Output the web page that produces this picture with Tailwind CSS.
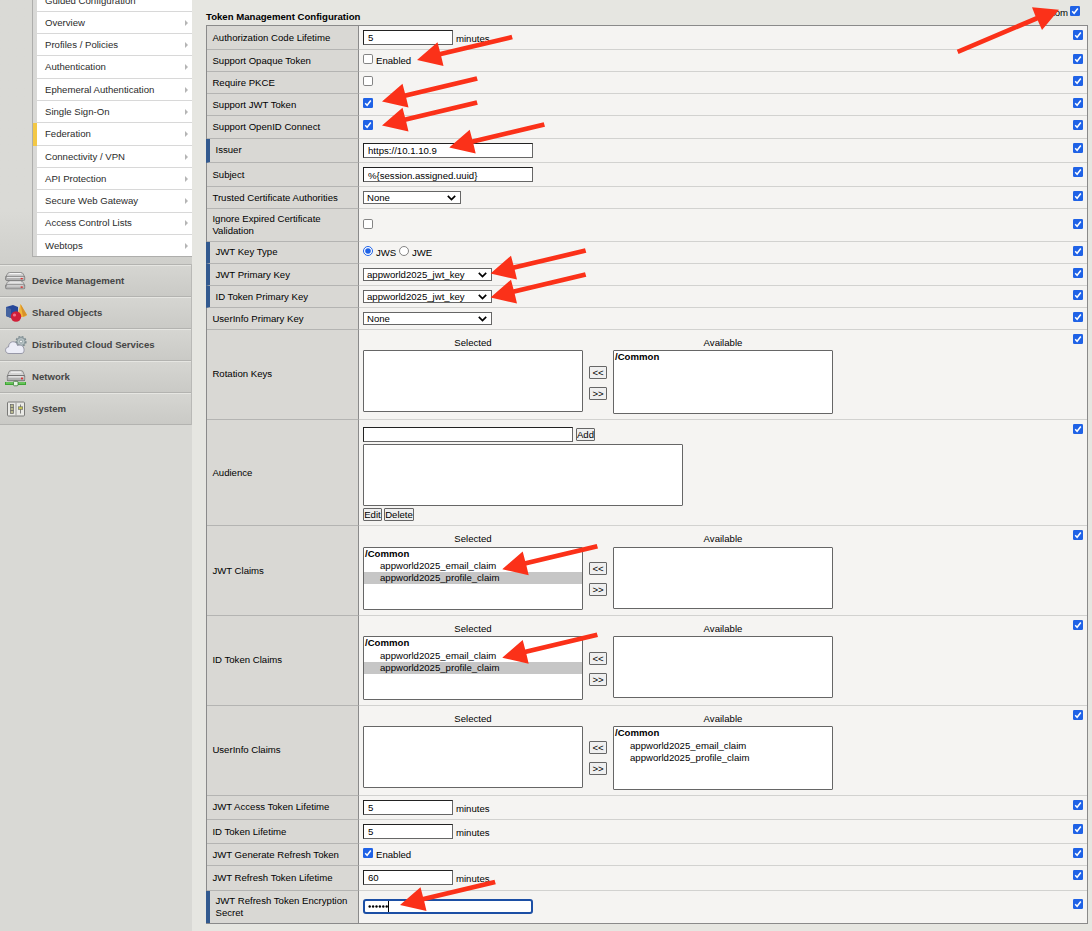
<!DOCTYPE html>
<html lang="en">
<head>
<meta charset="utf-8">
<title>Token Management Configuration</title>
<script src="https://cdn.jsdelivr.net/npm/@tailwindcss/browser@4"></script>
</head>
<body class="w-[1092px] h-[931px] overflow-hidden bg-[#e6e6e1] text-black text-[9.6px] leading-[12px] font-['Liberation_Sans',Arial,sans-serif]">
<svg class="hidden">
  <symbol id="on" viewBox="0 0 10 10"><rect width="10" height="10" rx="1.3" fill="#1f62e6"/><path d="M2.2 5.3 4.1 7.3 7.8 2.5" fill="none" stroke="#fff" stroke-width="1.5"/></symbol>
  <symbol id="off" viewBox="0 0 10 10"><rect x=".5" y=".5" width="9" height="9" rx="1.3" fill="#fff" stroke="#767676" stroke-width=".9"/></symbol>
  <symbol id="ron" viewBox="0 0 10 10"><circle cx="5" cy="5" r="4.5" fill="#fff" stroke="#1f62e6"/><circle cx="5" cy="5" r="2.8" fill="#1f62e6"/></symbol>
  <symbol id="roff" viewBox="0 0 10 10"><circle cx="5" cy="5" r="4.5" fill="#fff" stroke="#767676" stroke-width=".9"/></symbol>
  <symbol id="arrow" viewBox="0 -30 100 40"><path d="M0 0 20.5-17.8 23-8.2 94.5-25.2 95.8-20.7 24.2-3.7 26.5 6z" fill="#fb3119"/></symbol>
  <symbol id="disk" viewBox="0 0 20 9" preserveAspectRatio="none"><path d="M4.500.5h11c1.200 0 1.800.5 2.200 1.400L19.300 5H.7L2.300 1.900C2.700 1 3.300.5 4.500.5z" fill="#d4d4d4" stroke="#858585" stroke-width=".8"/><path d="M4.500 1.600h11" stroke="#f6f6f6"/><rect x=".6" y="4.300" width="18.800" height="4.200" rx="1.200" fill="#b2b2b2" stroke="#747474" stroke-width=".8"/><path d="M2 5.400h16" stroke="#efefef" stroke-width=".9"/><rect x="15.300" y="5.900" width="2" height="1.400" fill="#dc2f2f"/></symbol>
</svg>
<div class="relative flex w-[1092px] h-[931px] overflow-hidden">
  <nav class="flex flex-col w-[192px] h-[931px] shrink-0 bg-[#d9d9d5] text-[#2b2b2b]">
    <div class="h-[264px] pl-[32px] bg-linear-to-b from-[#dadad6] from-80% to-[#cfcfcb]">
      <div id="menu" class="h-[257px] overflow-hidden flex flex-col border-l border-b border-[#aeaeac] bg-[#d9d9d7]"></div>
    </div>
    <div id="sections" class="flex flex-col border-r border-[#b9b9b6] text-[#454545] font-bold"></div>
  </nav>
  <main class="flex flex-col w-[900px] pl-[14px]">
    <div class="flex justify-between h-[25px] w-[874px]">
      <h1 class="pt-[11px] font-bold text-[9.6px]">Token Management Configuration</h1>
      <div class="flex pt-[6px] gap-[2px]"><span class="pt-px">Custom</span><svg class="size-[10px]"><use href="#on"/></svg></div>
    </div>
    <div id="rows" class="w-[882px] h-[899px] border border-[#8a8a8a] bg-[#f5f4f2] flex flex-col"></div>
  </main>
  <div id="arrows"></div>
</div>
<script>
const cb = id => `<svg class="size-[10px] shrink-0"><use href="#${id}"/></svg>`;
const W = {90:'w-[90px]',170:'w-[170px]',210:'w-[210px]',98:'w-[98px]',129:'w-[129px]',19:'w-[19px]',30:'w-[30px]',18:'w-[18px]'};
const input = (t,w,p='pt-[1px]') => `<div class="${W[w]} ${p} h-[15px] pl-[4px] border border-t-[#222] border-l-[#222] border-r-[#666] border-b-[#666] bg-white">${t}</div>`;
const minutes = t => `<div class="flex pt-[4px]">${input(t,90)}<span class="pl-[3px] pt-[3px]">minutes</span></div>`;
const check = (id,t='') => `<div class="flex pt-[4px]">${cb(id)}<span class="pl-[3px] pt-[1px]">${t}</span></div>`;
const select = (t,w) => `<div class="pt-[4px]"><div class="${W[w]} h-[13px] flex justify-between items-center border border-[#666] bg-white pl-[3px] pr-[4px]"><span>${t}</span><svg class="w-[9px] h-[6px]" viewBox="0 0 9 6"><path d="M.8.8 4.5 4.5 8.2.8" fill="none" stroke="#000" stroke-width="1.7"/></svg></div></div>`;
const btn = (t,w) => `<div class="${W[w]} h-[13px] flex items-center justify-center border border-[#666] rounded-[1px] bg-[#efefef] whitespace-nowrap">${t}</div>`;
const list = (items,h,gap) => `<div class="w-[220px] ${h} border border-[#666] rounded-[1px] bg-white leading-[12px]">${items.map(i=>i==='/Common'?`<div class="${gap?'h-[13px]':'h-[12px]'} pl-[1px] font-bold">${i}</div>`:`<div class="h-[12px] pl-[16px] ${i[0]==='*'?'bg-[#c6c6c6]':''}">${i.replace('*','')}</div>`).join('')}</div>`;
const dual = (a,ha,b,hb,{g='mb-[1px]',gap=0,bp='pt-[29px]'}={}) => `<div class="flex pt-[7px]">
 <div class="w-[220px]"><div class="text-center h-[12px] ${g}">Selected</div>${list(a,ha,gap)}</div>
 <div class="w-[30px] flex flex-col items-center gap-[8px] ${bp}">${btn('&lt;&lt;',18)}${btn('&gt;&gt;',18)}</div>
 <div class="w-[220px]"><div class="text-center h-[12px] ${g}">Available</div>${list(b,hb,gap)}</div></div>`;
const E='appworld2025_email_claim',P='appworld2025_profile_claim',C='/Common';
const rows = [
 ['Authorization Code Lifetime','h-[24px]',minutes('5')],
 ['Support Opaque Token','h-[22px]',check('off','Enabled')],
 ['Require PKCE','h-[22px]',check('off')],
 ['Support JWT Token','h-[22px]',check('on')],
 ['Support OpenID Connect','h-[23px]',check('on')],
 ['Issuer','h-[24px]',`<div class="pt-[4px]">${input('https://10.1.10.9',170)}</div>`,1],
 ['Subject','h-[24px]',`<div class="pt-[4px]">${input('%{session.assigned.uuid}',170,'pt-[2px]')}</div>`],
 ['Trusted Certificate Authorities','h-[22px]',select('None',98)],
 ['Ignore Expired Certificate<br>Validation','h-[33px]',`<div class="pt-[10px]">${cb('off')}</div>`,0,'pt-[10px]'],
 ['JWT Key Type','h-[22px]',`<div class="flex pt-[4px]">${cb('ron')}<span class="w-[26px] pl-[3px] pt-[1px]">JWS</span>${cb('roff')}<span class="pl-[3px] pt-[1px]">JWE</span></div>`,1],
 ['JWT Primary Key','h-[22px]',select('appworld2025_jwt_key',129),1],
 ['ID Token Primary Key','h-[22px]',select('appworld2025_jwt_key',129),1],
 ['UserInfo Primary Key','h-[22px]',select('None',129)],
 ['Rotation Keys','h-[90px]',dual([],'h-[62px]',[C],'h-[64px]')],
 ['Audience','h-[106px]',`<div class="pt-[7px]"><div class="flex gap-[3px] h-[17px]">${input('',210)}<div class="pt-[1px]">${btn('Add',19)}</div></div><div class="w-[320px] h-[62px] border border-[#666] rounded-[1px] bg-white"></div><div class="flex gap-[2px] pt-[2px]">${btn('Edit',19)}${btn('Delete',30)}</div></div>`],
 ['JWT Claims','h-[90px]',dual([C,E,'*'+P],'h-[63px]',[],'h-[62px]',{g:'mb-[2px]'})],
 ['ID Token Claims','h-[90px]',dual([C,E,'*'+P],'h-[64px]',[],'h-[62px]',{gap:1})],
 ['UserInfo Claims','h-[90px]',dual([],'h-[62px]',[C,E,P],'h-[64px]',{gap:1,bp:'pt-[28px]'})],
 ['JWT Access Token Lifetime','h-[24px]',minutes('5')],
 ['ID Token Lifetime','h-[24px]',minutes('5')],
 ['JWT Generate Refresh Token','h-[22px]',check('on','Enabled')],
 ['JWT Refresh Token Lifetime','h-[25px]',minutes('60')],
 ['JWT Refresh Token Encryption<br>Secret','h-[32px]',`<div class="pt-[8px]"><div class="w-[170px] h-[15px] flex items-center border-2 border-[#1c4fa5] rounded-[3px] bg-white pl-[3px]"><svg class="w-[22px] h-[11px]"><g fill="#000"><circle cx="1.7" cy="5.5" r="1.2"/><circle cx="5.1" cy="5.5" r="1.2"/><circle cx="8.5" cy="5.5" r="1.2"/><circle cx="11.9" cy="5.5" r="1.2"/><circle cx="15.3" cy="5.5" r="1.2"/><circle cx="18.7" cy="5.5" r="1.2"/><path d="M20 0h1v11h-1z"/></g></svg></div></div>`,1,'pt-[8px]'],
];
const raised = ['Issuer','JWT Key Type','Rotation Keys','ID Token Claims','UserInfo Claims','JWT Access Token Lifetime'];
document.getElementById('rows').innerHTML = rows.map(([l,h,c,req,p],i)=>{
 const last = i===rows.length-1;
 return `<div class="${h} flex shrink-0">
 <div class="${req?'w-[153px] -ml-px border-l-[4px] border-l-[#335a8f] pl-[5.5px]':'w-[152px] pl-[5.4px]'} ${raised.includes(l)?'pb-[2px]':''} shrink-0 flex items-center ${last?'':'border-b'} border-b-[#b4b4b2] border-r border-r-[#8a8a8a] bg-[#d9d8d4]">${l}</div>
 <div class="grow flex justify-between pl-[4px] pr-[4px] ${last?'':'border-b'} border-[#d2d2d0]">${c}<div class="${p||'pt-[4px]'}">${cb('on')}</div></div></div>`}).join('');

const menu = [['Guided Configuration','h-[22px] -mt-[10px]'],['Overview','h-[22px]'],['Profiles / Policies','h-[22px]'],['Authentication','h-[23px]'],['Ephemeral Authentication','h-[22px]'],['Single Sign-On','h-[22px]'],['Federation','h-[23px]'],['Connectivity / VPN','h-[22px]'],['API Protection','h-[22px]'],['Secure Web Gateway','h-[23px]'],['Access Control Lists','h-[22px]','pb-px'],['Webtops','h-[21px]']];
document.getElementById('menu').innerHTML = menu.map(([t,h,p],i)=>`<div class="${h} shrink-0 flex"><div class="w-[4px] ${t==='Federation'?'bg-[#f3c846]':''}"></div><div class="grow flex items-center justify-between bg-white pl-[8px] pr-[4px] ${p||''} ${t==='Webtops'?'':'border-b'} border-[#d8d8d8]"><span>${t}</span>${i?'<svg class="w-[3px] h-[6px]" viewBox="0 0 3 6"><path d="M0 0 3 3 0 6z" fill="#b5b5b5"/></svg>':''}</div></div>`).join('');

const icons = [
 `<use href="#disk" x="0" y="1" width="20.500" height="9"/><use href="#disk" x="0" y="9.500" width="20.500" height="9"/>`,
 `<path d="M1 4l7-2 5 2v9l-7 2-5-2z" fill="#27489a"/><path d="M1 4l5 2v9l-5-2z" fill="#46649f"/><path d="M15.500 1l6.500 11c-1.500 2.500-8 2.500-9.500 0z" fill="#f2b63a"/><path d="M15.500 1 22 12l-4 1.700z" fill="#d8912a"/><circle cx="11" cy="13.500" r="5.200" fill="#d01f38"/><circle cx="9.500" cy="12" r="1.600" fill="#f0748a"/>`,
 `<circle cx="16" cy="6.500" r="4.900" fill="#c1cbcd" stroke="#7d8b8f" stroke-width="1.500" stroke-dasharray="2 1.300"/><circle cx="16" cy="6.500" r="4" fill="#b8c4c6" stroke="#7d8b8f" stroke-width=".8"/><circle cx="16" cy="6.500" r="1.500" fill="#eef1f2" stroke="#7d8b8f" stroke-width=".7"/><path d="M4 18.500c-4.500 0-4.500-6.500-.5-6.500 0-6.500 8-7 9-1.500 4-1.500 7 1.500 6.500 5 0 2-1 3-3 3z" fill="#ecedf7" stroke="#8f90a0" stroke-width=".9"/>`,
 `<use href="#disk" x="1.500" y="3" width="19" height="11.500"/><path d="M0 16.500h21" stroke="#3fa535" stroke-width="3"/><path d="M1 16h19" stroke="#8fe080" stroke-width="1"/><rect x="8.500" y="14.300" width="4.500" height="4.500" rx="1" fill="#e8f4e6" stroke="#3a7a35" stroke-width=".8"/>`,
 `<rect x="2.500" y="3" width="17" height="14" rx="1" fill="#e9e9e5" stroke="#7a7a78" stroke-width="1"/><path d="M11 3.500v13" stroke="#9a9a98"/><rect x="5.500" y="5.500" width="3" height="9" fill="#b9b98c" stroke="#666" stroke-width=".7"/><path d="M5.500 8.500h3m-3 3h3M15.500 5.500v9" stroke="#666" stroke-width=".8"/><rect x="13.300" y="7.800" width="4.400" height="2.600" fill="#c5c552" stroke="#666" stroke-width=".6"/>`];
document.getElementById('sections').innerHTML = ['Device Management','Shared Objects','Distributed Cloud Services','Network','System'].map((t,i)=>`<div class="h-[32px] flex items-center border-t border-[#b3b3b0] bg-linear-to-b from-[#d6d6d2] to-[#cacac6] pl-[5px] shadow-[inset_0_1px_0_#e6e6e2]"><svg class="w-[22px] h-[20px] mr-[5px]" viewBox="0 0 22 20">${icons[i]}</svg><span class="text-[9.6px]">${t}</span></div>`).join('')+'<div class="h-px bg-[#b3b3b0]"></div>';

// callout arrows, positioned by their tips
document.getElementById('arrows').innerHTML = '<svg class="absolute left-0 top-0 w-[1092px] h-[931px]">'+[[417,60],[382,101.5],[382,125.5],[449.2,147.5],[490.5,273.5],[490.5,297.5],[502.2,569.3],[502.2,657.8],[400,905]].map(([x,y])=>`<use href="#arrow" x="${x}" y="${y-30}" width="100" height="40"/>`).join('')+'<path d="M1059 9.700 1032 7.200 1035.500 16.200 956.800 49.800 958.500 54 1037.800 20.500 1042 30z" fill="#fb3119"/></svg>';
</script>
</body>
</html>
